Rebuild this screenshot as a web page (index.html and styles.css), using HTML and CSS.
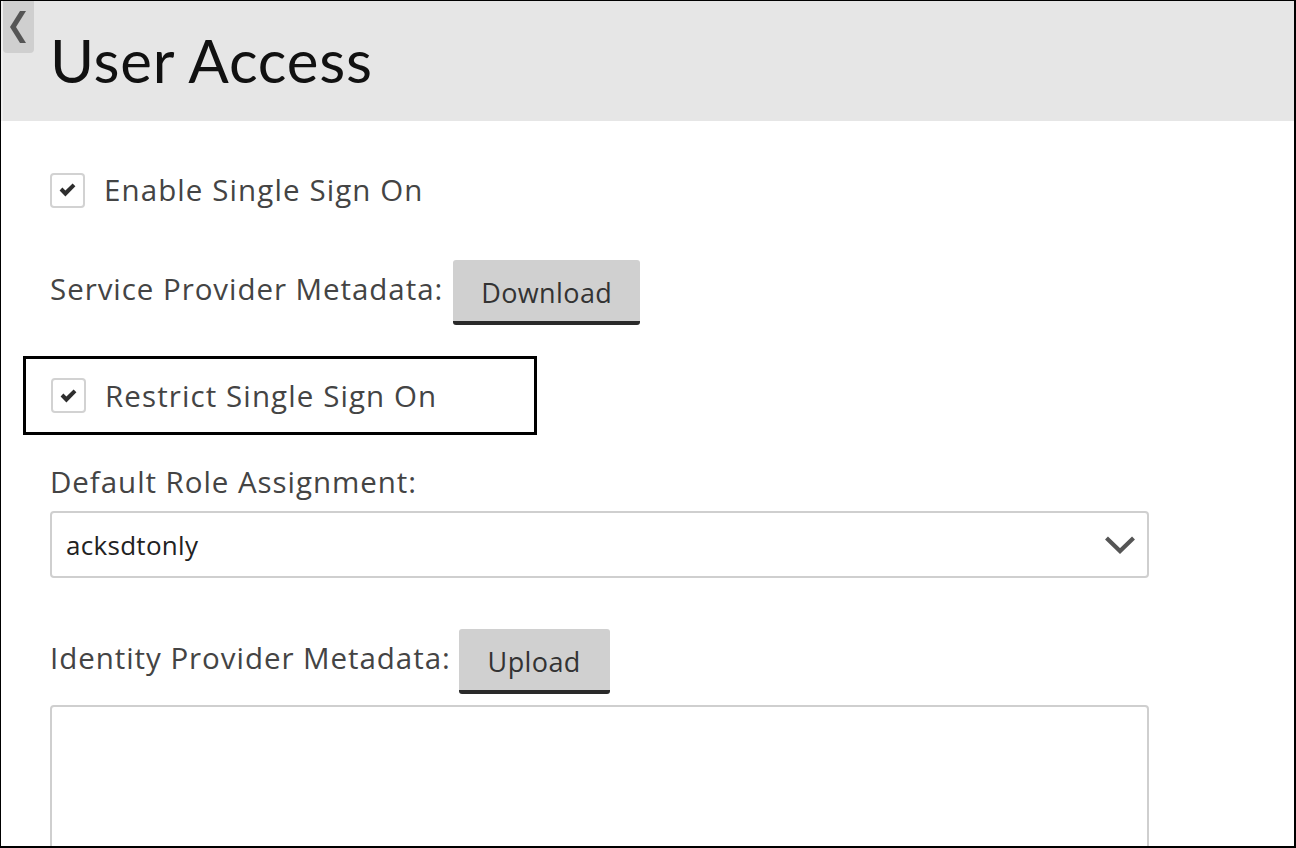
FILE: index.html
```html
<!DOCTYPE html>
<html>
<head>
<meta charset="utf-8">
<link rel="stylesheet" href="styles.css">
</head>
<body>
<div class="frame">
  <header class="header">
    <div class="back"><svg width="31" height="52" viewBox="0 0 31 52"><polygon points="17,10 23,10 13,26 23,42 17,42 7,26" fill="#555"/></svg></div>
    <h1 class="title">User Access</h1>
  </header>
  <main class="content">
    <label class="check-row first">
      <span class="checkbox"><svg width="17" height="14" viewBox="0 0 17 14"><path d="M0.6 7.4 L3.4 4.6 L6.4 7.6 L13.6 0.4 L16.4 3.2 L6.4 13.4 Z" fill="#2e2e2e"/></svg></span>
      <span class="check-label">Enable Single Sign On</span>
    </label>
    <div class="field-row sp">
      <span class="label">Service Provider Metadata:</span>
      <button class="btn download">Download</button>
    </div>
    <div class="highlight">
      <label class="check-row">
        <span class="checkbox"><svg width="17" height="14" viewBox="0 0 17 14"><path d="M0.6 7.4 L3.4 4.6 L6.4 7.6 L13.6 0.4 L16.4 3.2 L6.4 13.4 Z" fill="#2e2e2e"/></svg></span>
        <span class="check-label">Restrict Single Sign On</span>
      </label>
    </div>
    <div class="label role-label">Default Role Assignment:</div>
    <div class="select">
      <span class="select-value">acksdtonly</span>
      <svg class="chev" width="32" height="20" viewBox="0 0 32 20"><path d="M2.5 3 L16 16 L29.5 3" fill="none" stroke="#555" stroke-width="4.2"/></svg>
    </div>
    <div class="field-row idp">
      <span class="label">Identity Provider Metadata:</span>
      <button class="btn upload">Upload</button>
    </div>
    <div class="textarea"></div>
  </main>
</div>
</body>
</html>
```
FILE: styles.css
```css
html, body {
  margin: 0;
  padding: 0;
  background: #fff;
}
.frame {
  width: 1296px;
  height: 848px;
  box-sizing: border-box;
  border-top: 1px solid #000;
  border-left: 1px solid #000;
  border-right: 2px solid #000;
  border-bottom: 2px solid #000;
  overflow: hidden;
  font-family: "Open Sans", Lato, sans-serif;
  color: #444;
}
.header {
  position: relative;
  height: 120px;
  background: #e6e6e6;
  border-left: 2px solid #efefef;
}
.back {
  position: absolute;
  left: 0;
  top: 0;
  width: 31px;
  height: 52px;
  background: #cfcfcf;
  border-radius: 0 0 4px 4px;
}
.back svg { display: block; }
.title {
  margin: 0;
  padding: 23px 0 0 47px;
  font-family: Lato, sans-serif;
  font-weight: 400;
  font-size: 60px;
  line-height: 72px;
  color: #111;
  letter-spacing: 0.8px;
}
.content {
  padding-left: 49px;
}
.check-row {
  display: flex;
  align-items: center;
  gap: 19px;
}
.check-row.first {
  margin-top: 51px;
}
.checkbox {
  width: 31px;
  height: 31px;
  border: 2px solid #d2d2d2;
  border-radius: 4px;
  background: #fff;
  display: flex;
  align-items: center;
  justify-content: center;
  flex: none;
}
.check-label, .label {
  font-size: 29.5px;
  letter-spacing: 0.95px;
  color: #444;
  line-height: 36px;
}
.check-label {
  letter-spacing: 1.1px;
}
.field-row {
  display: flex;
  align-items: flex-start;
}
.field-row.sp {
  margin-top: 52px;
}
.field-row .label {
  margin-top: 11px;
}
.btn {
  margin-left: 10px;
  height: 65px;
  background: #d0d0d0;
  border: none;
  border-bottom: 4px solid #2a2a2a;
  border-radius: 3px;
  font-family: "Open Sans", Lato, sans-serif;
  font-size: 27px;
  letter-spacing: 0.4px;
  color: #333;
  padding: 4px 0 0 0;
  box-sizing: border-box;
}
.download { width: 187px; }
.upload { width: 151px; margin-left: 8px; }
.highlight {
  margin: 31px 0 0 -27px;
  width: 514px;
  height: 79px;
  box-sizing: border-box;
  border: 3px solid #000;
  padding-left: 25px;
  display: flex;
  align-items: center;
}
.role-label {
  margin-top: 29px;
}
.select {
  margin-top: 11px;
  width: 1099px;
  height: 67px;
  box-sizing: border-box;
  border: 2px solid #cfcfcf;
  border-radius: 4px;
  display: flex;
  align-items: center;
  justify-content: space-between;
  padding: 0 11px 0 14px;
}
.select-value {
  font-size: 26px;
  letter-spacing: 0.3px;
  color: #222;
}
.chev { display: block; }
.field-row.idp {
  margin-top: 51px;
}
.textarea {
  margin-top: 11px;
  width: 1099px;
  height: 200px;
  box-sizing: border-box;
  border: 2px solid #cfcfcf;
  border-radius: 4px;
}
```
